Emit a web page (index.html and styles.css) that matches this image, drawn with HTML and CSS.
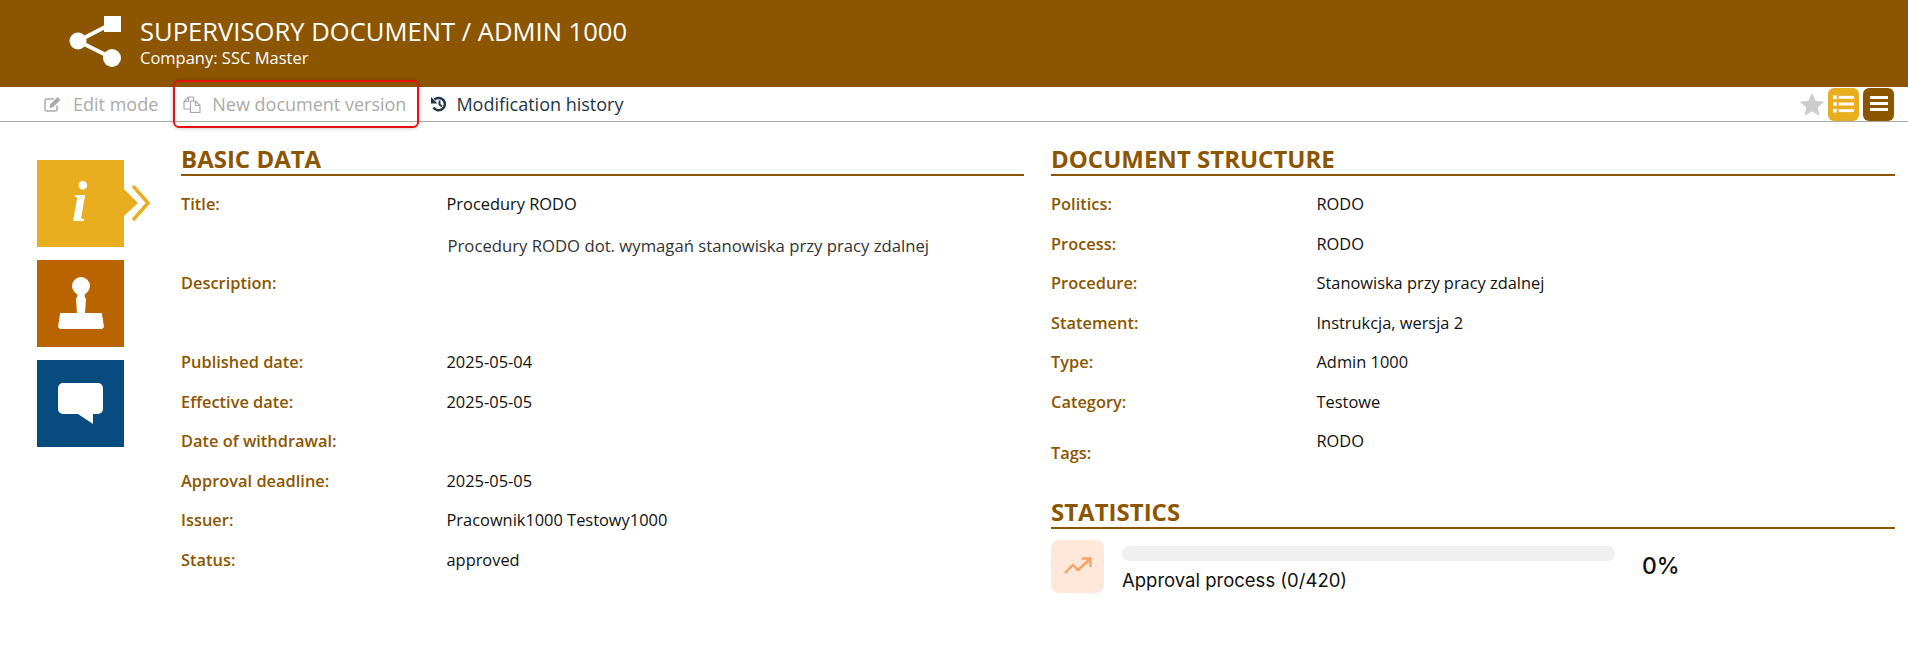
FILE: index.html
```html
<!DOCTYPE html>
<html lang="en">
<head>
  <meta charset="UTF-8">
  <title>Supervisory document</title>
  <link rel="stylesheet" href="styles.css">
</head>
<body>
  <header class="top">
    <svg class="top-icon" width="52" height="51" viewBox="0 0 52 51">
      <path d="M9 25 L40 9 M9 25 L43 42" stroke="#fff" stroke-width="4" fill="none"/>
      <circle cx="9" cy="25" r="8.500" fill="#fff"/>
      <circle cx="43" cy="42" r="9" fill="#fff"/>
      <rect x="35" y="0" width="17" height="16" fill="#fff"/>
    </svg>
    <div>
      <h1>SUPERVISORY DOCUMENT / ADMIN 1000</h1>
      <p>Company: SSC Master</p>
    </div>
  </header>

  <nav class="toolbar">
    <a class="tool off">
      <svg width="18" height="16" viewBox="0 0 18 16"><path d="M13 9.500v3.500a2 2 0 0 1-2 2H3a2 2 0 0 1-2-2V5a2 2 0 0 1 2-2h7" fill="none" stroke="#aaa" stroke-width="1.500"/><path d="M6 8.500l7.500-7.500 3 2.800-7.500 7.500-3.500 1z" fill="#aaa"/></svg>
      Edit mode
    </a>
    <a class="tool off marked">
      <svg width="18" height="17" viewBox="0 0 18 17"><path d="M10.500 5V1H5.500L1 5.500V13h6M5.500 1v4.500H1" fill="none" stroke="#aaa" stroke-width="1.200"/><path d="M12.500 5H7.500v11.500h9.500V9.500zM12.500 5v4.500H17" fill="none" stroke="#aaa" stroke-width="1.200"/></svg>
      New document version
    </a>
    <a class="tool tool-history">
      <svg width="16" height="16" viewBox="0 0 16 16"><path d="M3.500 3.500a6.200 6.200 0 1 1-1 8" fill="none" stroke="#233648" stroke-width="2.500"/><path d="M0 1l6.500 6.500H0z" fill="#233648"/><path d="M8.500 4.500v4l2.500 2" fill="none" stroke="#233648" stroke-width="2"/></svg>
      Modification history
    </a>
    <div class="toolbar-right">
      <svg width="24" height="23" viewBox="0 0 24 23"><path d="M12 0l3.600 7.700 8.400 1-6.200 5.700 1.700 8.300L12 18.500l-7.500 4.200 1.700-8.300L0 8.700l8.400-1z" fill="#ccc"/></svg>
      <span class="view-btn yellow">
        <svg width="21" height="18" viewBox="0 0 22 18" fill="#fff"><rect width="4" height="4"/><rect y="7" width="4" height="4"/><rect y="14" width="4" height="4"/><rect x="6" y="0.500" width="16" height="3"/><rect x="6" y="7.500" width="16" height="3"/><rect x="6" y="14.500" width="16" height="3"/></svg>
      </span>
      <span class="view-btn brown">
        <svg width="18" height="16" viewBox="0 0 18 16" fill="#fff"><rect width="18" height="3"/><rect y="6" width="18" height="3"/><rect y="12" width="18" height="3"/></svg>
      </span>
    </div>
  </nav>

  <main class="content">
    <aside class="tabs">
      <div class="tab tab-info">
        <span class="tab-i">i</span>
        <svg class="tab-arrow" width="26" height="36" viewBox="0 0 26 36">
          <path d="M0 4l14 14L0 31z" fill="#e9ae20"/>
          <path d="M9 1l15 17L9 35" fill="none" stroke="#e9ae20" stroke-width="3.500"/>
        </svg>
      </div>
      <div class="tab tab-stamp">
        <svg width="46" height="53" viewBox="0 0 46 53" fill="#fff"><circle cx="23" cy="9" r="9"/><path d="M18 15h10l-1.500 4 1.500 3-1 14h-8l-1-14 1.500-3z"/><path d="M3 36h40a1 1 0 0 1 1 1l2 13-2 2H2l-2-2 2-13a1 1 0 0 1 1-1z"/></svg>
      </div>
      <div class="tab tab-chat">
        <svg width="45" height="41" viewBox="0 0 45 41" fill="#fff"><path d="M5 0h35a5 5 0 0 1 5 5v21a5 5 0 0 1-5 5h-5v10l-15-10H5a5 5 0 0 1-5-5V5a5 5 0 0 1 5-5z"/></svg>
      </div>
    </aside>

    <section class="col">
      <h2>BASIC DATA</h2>
      <div class="row"><b>Title:</b><span>Procedury RODO</span></div>
      <div class="row row-desc">
        <b>Description:</b>
        <span class="desc">Procedury RODO dot. wymagań stanowiska przy pracy zdalnej</span>
      </div>
      <div class="row"><b>Published date:</b><span>2025-05-04</span></div>
      <div class="row"><b>Effective date:</b><span>2025-05-05</span></div>
      <div class="row"><b>Date of withdrawal:</b><span></span></div>
      <div class="row"><b>Approval deadline:</b><span>2025-05-05</span></div>
      <div class="row"><b>Issuer:</b><span>Pracownik1000 Testowy1000</span></div>
      <div class="row"><b>Status:</b><span>approved</span></div>
    </section>

    <section class="col col-right">
      <h2>DOCUMENT STRUCTURE</h2>
      <div class="row"><b>Politics:</b><span>RODO</span></div>
      <div class="row"><b>Process:</b><span>RODO</span></div>
      <div class="row"><b>Procedure:</b><span>Stanowiska przy pracy zdalnej</span></div>
      <div class="row"><b>Statement:</b><span>Instrukcja, wersja 2</span></div>
      <div class="row"><b>Type:</b><span>Admin 1000</span></div>
      <div class="row"><b>Category:</b><span>Testowe</span></div>
      <div class="row row-tags"><b>Tags:</b><span>RODO</span></div>

      <h2 class="stats-title">STATISTICS</h2>
      <div class="stat">
        <div class="stat-icon">
          <svg width="28" height="18" viewBox="0 0 28 18"><path d="M1 16l8-8 5 5L26 2M18 1.500h8.500V10" fill="none" stroke="#f9a266" stroke-width="2.400"/></svg>
        </div>
        <div class="stat-body">
          <div class="bar"></div>
          <div class="stat-label">Approval process (0/420)</div>
        </div>
        <div class="stat-value">0%</div>
      </div>
    </section>
  </main>
</body>
</html>
```

FILE: styles.css
```css
* {
  box-sizing: border-box;
}
body {
  margin: 0;
  background: #fff;
  font-family: 'Open Sans', sans-serif;
  font-size: 16.400px;
  color: #111;
}
.top {
  height: 87px;
  background: #8c5600;
  color: #fff;
  display: flex;
  align-items: center;
  padding: 0 0 4px 69px;
  gap: 19px;
}
.top h1 {
  margin: 0;
  font-size: 25.600px;
  font-weight: 400;
  line-height: 33px;
}
.top p {
  margin: 0;
  font-size: 16.500px;
  line-height: 20px;
}
.toolbar {
  height: 35px;
  border-bottom: 1px solid #aaa;
  display: flex;
  align-items: center;
  padding-left: 44px;
  font-size: 18px;
  color: #233648;
}
.tool {
  display: flex;
  align-items: center;
  gap: 11px;
  margin-right: 25px;
  white-space: nowrap;
}
.tool-history {
  gap: 9px;
}
.tool.off {
  color: #aaa;
}
.marked {
  position: relative;
}
.marked::after {
  content: '';
  position: absolute;
  inset: -12px -13px -12px -10px;
  border: 2px solid #e81010;
  border-radius: 6px;
  box-shadow: 0 0 5px rgba(0, 0, 0, 0.25);
}
.toolbar-right {
  margin-left: auto;
  margin-right: 14px;
  display: flex;
  align-items: center;
  gap: 4px;
}
.view-btn {
  width: 31px;
  height: 33px;
  border-radius: 6px;
  display: flex;
  align-items: center;
  justify-content: center;
}
.yellow {
  background: #e9ae20;
}
.brown {
  background: #8c5600;
}
.content {
  display: flex;
  padding: 21px 13px 0 37px;
}
.tabs {
  width: 144px;
  padding-top: 17px;
  flex: none;
}
.tab {
  width: 87px;
  height: 87px;
  margin-bottom: 13px;
  display: flex;
  align-items: center;
  justify-content: center;
  position: relative;
}
.tab-info {
  background: #e9ae20;
}
.tab-stamp {
  background: #ba6400;
}
.tab-chat {
  background: #084c7f;
}
.tab-i {
  color: #fff;
  font-family: 'Liberation Serif', serif;
  font-style: italic;
  font-weight: bold;
  font-size: 56px;
  line-height: 1;
  margin: -4px 2px 0 0;
}
.tab-arrow {
  position: absolute;
  left: 87px;
  top: 25px;
}
.col {
  width: 843px;
  flex: none;
}
.col-right {
  width: 844px;
  margin-left: 27px;
}
h2 {
  margin: 0 0 8px;
  height: 33px;
  border-bottom: 2px solid #8c5600;
  color: #8c5600;
  font-size: 24px;
  font-weight: 700;
  line-height: 31px;
}
.row {
  display: flex;
  height: 39.500px;
  align-items: center;
}
.row b {
  width: 265.500px;
  flex: none;
  color: #8c5600;
  font-weight: 600;
}
.row-desc {
  height: 118.500px;
}
.desc {
  margin-left: 1px;
  font-size: 16.700px;
  color: #333;
  align-self: flex-start;
  padding-top: 10px;
}
.row-tags {
  align-items: flex-start;
  padding-top: 8px;
}
.row-tags b {
  padding-top: 12px;
}
.stats-title {
  margin-top: 35px;
  margin-bottom: 11px;
}
.stat {
  display: flex;
  align-items: flex-start;
}
.stat-icon {
  width: 53px;
  height: 53px;
  background: #ffe8da;
  border-radius: 8px;
  display: flex;
  align-items: center;
  justify-content: center;
  flex: none;
}
.stat-body {
  width: 493px;
  margin-left: 18px;
  padding-top: 6px;
  font-family: 'Inter', sans-serif;
}
.bar {
  height: 15px;
  background: #f0f0f0;
  border-radius: 8px;
  margin-bottom: 6px;
}
.stat-label {
  font-size: 18.500px;
  line-height: 26px;
}
.stat-value {
  align-self: center;
  margin-left: 27px;
  font-family: 'Inter', sans-serif;
  font-size: 23px;
  font-weight: 500;
}
```
